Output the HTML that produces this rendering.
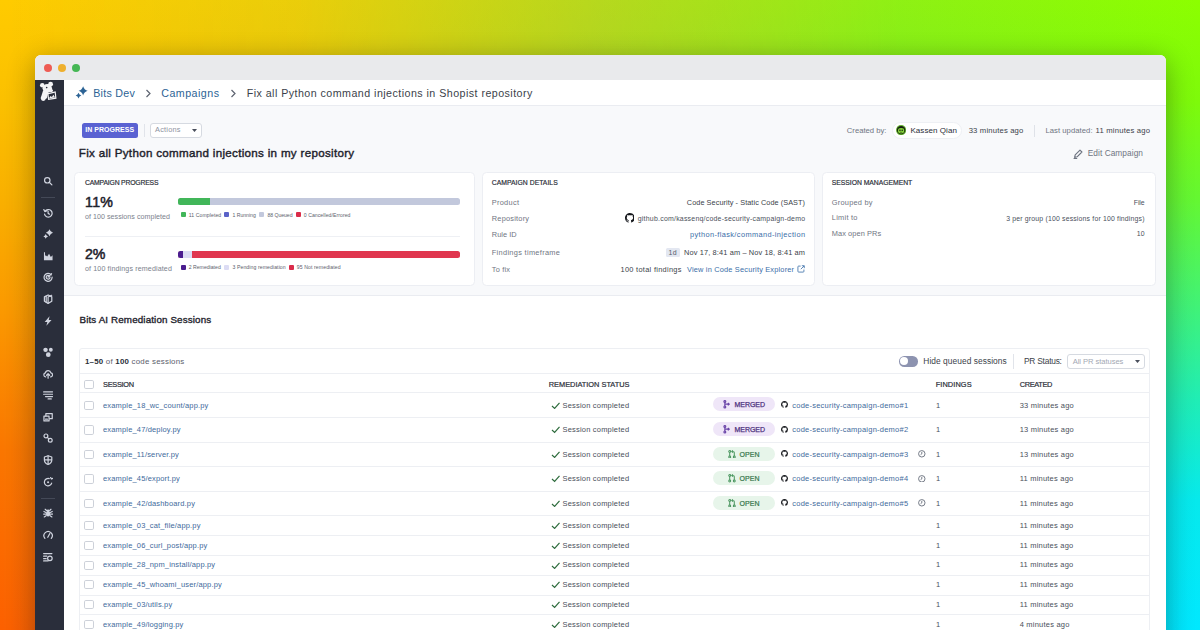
<!DOCTYPE html>
<html lang="en"><head><meta charset="utf-8"><title>Bits Dev – Campaigns</title>
<style>
html,body{margin:0;padding:0;}
body{width:1200px;height:630px;overflow:hidden;position:relative;font-family:'Liberation Sans', sans-serif;background:#8cff00;}
#bg1,#bg2,#bg3{position:absolute;left:0;top:0;width:1200px;height:630px;}
#bg1{background:linear-gradient(to bottom,#8cff00 0%,#7efa0a 15.9%,#64f732 31.7%,#40f278 48.9%,#20edb5 63.5%,#06e9ec 79.4%,#00e8ff 100%);}
#bg2{background:linear-gradient(to bottom,#ffcb00 0%,#fbc000 16%,#f9af00 32%,#fb9900 49%,#fa7600 71.4%,#fc6000 100%);
 -webkit-mask-image:linear-gradient(to right,rgba(0,0,0,1) 0%,rgba(0,0,0,.86) 25%,rgba(0,0,0,.42) 50%,rgba(0,0,0,.02) 75%,rgba(0,0,0,0) 100%);
 mask-image:linear-gradient(to right,rgba(0,0,0,1) 0%,rgba(0,0,0,.86) 25%,rgba(0,0,0,.42) 50%,rgba(0,0,0,.02) 75%,rgba(0,0,0,0) 100%);}
#bg3{background:linear-gradient(to right,rgba(148,120,200,0) 0%,rgba(148,120,200,.05) 25%,rgba(148,120,200,.15) 50%,rgba(148,120,200,.1) 75%,rgba(148,120,200,0) 100%);}
#win{position:absolute;left:35px;top:54.6px;width:1131px;height:640px;border-radius:6px 6px 0 0;overflow:hidden;background:#fff;}
#shadow{position:absolute;left:35px;top:54.6px;width:1131px;height:640px;border-radius:6px;box-shadow:0 6px 28px rgba(0,0,0,.33);}
#pg{position:absolute;left:-35px;top:-54.6px;width:1200px;height:630px;}
#pg div,#pg svg,#pg .t{position:absolute;box-sizing:border-box;}
.t{white-space:nowrap;}
</style></head><body>
<div id="bg1"></div><div id="bg2"></div><div id="bg3"></div>
<div id="shadow"></div>
<div id="win"><div id="pg">
<div style="left:35.00px;top:54.00px;width:1132.00px;height:26.20px;background:#e9eaec;"></div>
<div style="left:43.60px;top:63.60px;width:8.20px;height:8.20px;background:#ee5c54;border-radius:50%;"></div>
<div style="left:57.80px;top:63.60px;width:8.20px;height:8.20px;background:#eeb02e;border-radius:50%;"></div>
<div style="left:72.00px;top:63.60px;width:8.20px;height:8.20px;background:#45b755;border-radius:50%;"></div>
<div style="left:35.00px;top:80.20px;width:28.60px;height:560.00px;background:#2a2e3b;"></div>
<div style="left:63.60px;top:80.20px;width:1103.00px;height:26.00px;background:#fff;border-bottom:1px solid #eaecf1;"></div>
<div style="left:63.60px;top:106.20px;width:1103.00px;height:190.20px;background:#f8f9fb;border-bottom:1px solid #eaecf1;"></div>
<svg style="left:36.00px;top:78.00px;" width="26.00" height="26.00" viewBox="0 0 26 26"><g fill="#f4f4f6"><circle cx="6.300" cy="7.300" r="2.300"/><circle cx="14.600" cy="6.200" r="2.400"/><ellipse cx="11.300" cy="10.300" rx="4.700" ry="4.300"/><path d="M13.500 8.500l3.400 3.400c.5.900-.2 1.900-1.200 2l-4 .3z"/><path d="M7.200 12.300l5.300 1.700-1.700 6.300-4.200 2.200-1.900-2.600z"/><circle cx="7.300" cy="20.600" r="2.400"/><path d="M11.200 15.300l8.500-2.100.8 7.500-8.400 1.200z"/></g><path d="M12.500 16.300l6.200-1.500.5 4.900-6.100.9z" fill="#2a2e3b"/><path d="M12.900 20.300l1.700-2.200 1.300.9 1.500-2.300 1.700 2.800z" fill="#f4f4f6"/><circle cx="10.700" cy="9.600" r=".8" fill="#2a2e3b"/></svg>
<svg style="left:42.70px;top:176.30px;" width="10.20" height="10.20" viewBox="0 0 16 16"><circle cx="6.700" cy="6.700" r="4.300" fill="none" stroke="#cfd3de" stroke-width="1.9" stroke-linecap="round" stroke-linejoin="round" stroke-width="2.200"/><path d="M10.200 10.200L14 14" fill="none" stroke="#cfd3de" stroke-width="1.9" stroke-linecap="round" stroke-linejoin="round" stroke-width="2.400"/></svg>
<div style="left:41.00px;top:196.70px;width:14.00px;height:1.00px;background:#444957;"></div>
<svg style="left:42.70px;top:207.80px;" width="10.20" height="10.20" viewBox="0 0 16 16"><path d="M3.200 5.200A6 6 0 1 1 2.400 9.500" fill="none" stroke="#cfd3de" stroke-width="1.9" stroke-linecap="round" stroke-linejoin="round"/><path d="M1.300 2.500l1.700 3.100 3.200-1.300" fill="none" stroke="#cfd3de" stroke-width="1.9" stroke-linecap="round" stroke-linejoin="round"/><path d="M8 5v3.400l2.300 1.300" fill="none" stroke="#cfd3de" stroke-width="1.9" stroke-linecap="round" stroke-linejoin="round" stroke-width="1.600"/></svg>
<svg style="left:42.70px;top:229.40px;" width="10.20" height="10.20" viewBox="0 0 16 16"><path d="M10.20 0.20Q11.54 4.46 15.80 5.80Q11.54 7.14 10.20 11.40Q8.86 7.14 4.60 5.80Q8.86 4.46 10.20 0.20zM4.30 8.00Q5.19 10.81 8.00 11.70Q5.19 12.59 4.30 15.40Q3.41 12.59 0.60 11.70Q3.41 10.81 4.30 8.00z" fill="#cfd3de"/></svg>
<svg style="left:42.70px;top:251.20px;" width="10.20" height="10.20" viewBox="0 0 16 16"><path d="M1.500 2v12.500H15V6.500l-2.700 2.800-2.800-4.800-3 4.200L4.300 6.800 3.200 8V2z" fill="#cfd3de"/></svg>
<svg style="left:42.70px;top:272.10px;" width="10.20" height="10.20" viewBox="0 0 16 16"><path d="M13 4.500A6.300 6.300 0 1 0 14.300 8" fill="none" stroke="#cfd3de" stroke-width="1.9" stroke-linecap="round" stroke-linejoin="round" stroke-width="1.800"/><path d="M10.500 6.500A3 3 0 1 0 11 8" fill="none" stroke="#cfd3de" stroke-width="1.9" stroke-linecap="round" stroke-linejoin="round" stroke-width="1.600"/><path d="M8 8l5.500-5.500" fill="none" stroke="#cfd3de" stroke-width="1.9" stroke-linecap="round" stroke-linejoin="round" stroke-width="1.600"/></svg>
<svg style="left:42.70px;top:294.30px;" width="10.20" height="10.20" viewBox="0 0 16 16"><path d="M8 1.500l5.800 3v7L8 14.700 2.200 11.500v-7z" fill="none" stroke="#cfd3de" stroke-width="1.9" stroke-linecap="round" stroke-linejoin="round" stroke-width="1.700"/><path d="M5 3.200v9.500M8 4.800v9.700M8 4.800l5.600-2.800" fill="none" stroke="#cfd3de" stroke-width="1.9" stroke-linecap="round" stroke-linejoin="round" stroke-width="1.500"/></svg>
<svg style="left:42.70px;top:315.80px;" width="10.20" height="10.20" viewBox="0 0 16 16"><path d="M10.300 .5L2.600 9.300h4.200L5.300 15.500l8.100-9.200H9z" fill="#cfd3de"/></svg>
<svg style="left:42.70px;top:347.40px;" width="10.20" height="10.20" viewBox="0 0 16 16"><circle cx="4" cy="4.500" r="3.500" fill="#cfd3de"/><circle cx="12.300" cy="4.300" r="3" fill="#cfd3de"/><circle cx="8.300" cy="12" r="3.700" fill="#cfd3de"/></svg>
<svg style="left:42.70px;top:368.90px;" width="10.20" height="10.20" viewBox="0 0 16 16"><path d="M4.200 12.500a3.200 3.200 0 0 1-.4-6.300A4.400 4.400 0 0 1 12.400 6a3.300 3.300 0 0 1-.4 6.500" fill="none" stroke="#cfd3de" stroke-width="1.9" stroke-linecap="round" stroke-linejoin="round" stroke-width="1.700"/><path d="M8 14.500V7.500M5.600 9.800L8 7.300l2.400 2.500" fill="none" stroke="#cfd3de" stroke-width="1.9" stroke-linecap="round" stroke-linejoin="round" stroke-width="1.700"/></svg>
<svg style="left:42.70px;top:390.20px;" width="10.20" height="10.20" viewBox="0 0 16 16"><path d="M1 3h14M1 6.700h14M4 10.400h11M8 14h5" fill="none" stroke="#cfd3de" stroke-width="1.9" stroke-linecap="round" stroke-linejoin="round" stroke-width="2"/></svg>
<svg style="left:42.70px;top:411.90px;" width="10.20" height="10.20" viewBox="0 0 16 16"><path d="M4.500 6V2.500h10v8h-4" fill="none" stroke="#cfd3de" stroke-width="1.9" stroke-linecap="round" stroke-linejoin="round" stroke-width="1.700"/><rect x="1.500" y="6.500" width="8" height="7.500" fill="none" stroke="#cfd3de" stroke-width="1.9" stroke-linecap="round" stroke-linejoin="round" stroke-width="1.700"/><path d="M4 11.300h3" fill="none" stroke="#cfd3de" stroke-width="1.9" stroke-linecap="round" stroke-linejoin="round" stroke-width="1.400"/></svg>
<svg style="left:42.70px;top:433.40px;" width="10.20" height="10.20" viewBox="0 0 16 16"><circle cx="4.600" cy="4.600" r="3" fill="none" stroke="#cfd3de" stroke-width="1.9" stroke-linecap="round" stroke-linejoin="round" stroke-width="1.800"/><circle cx="11.400" cy="11.400" r="3" fill="none" stroke="#cfd3de" stroke-width="1.9" stroke-linecap="round" stroke-linejoin="round" stroke-width="1.800"/><path d="M6.800 6.800l2.400 2.400" fill="none" stroke="#cfd3de" stroke-width="1.9" stroke-linecap="round" stroke-linejoin="round" stroke-width="1.800"/></svg>
<svg style="left:42.70px;top:454.90px;" width="10.20" height="10.20" viewBox="0 0 16 16"><path d="M8 1.200l5.800 2v4.600c0 3.300-2.300 5.800-5.800 7-3.500-1.200-5.800-3.700-5.800-7V3.200z" fill="none" stroke="#cfd3de" stroke-width="1.9" stroke-linecap="round" stroke-linejoin="round" stroke-width="1.700"/><path d="M8 1.500v13M2.500 7.500h11" fill="none" stroke="#cfd3de" stroke-width="1.9" stroke-linecap="round" stroke-linejoin="round" stroke-width="1.300"/></svg>
<svg style="left:42.70px;top:476.90px;" width="10.20" height="10.20" viewBox="0 0 16 16"><path d="M13.600 9.500A5.800 5.800 0 1 1 9.800 2.600" fill="none" stroke="#cfd3de" stroke-width="1.9" stroke-linecap="round" stroke-linejoin="round" stroke-width="1.900"/><path d="M12 .8l1.200 2.400 2.300-1.200" fill="none" stroke="#cfd3de" stroke-width="1.9" stroke-linecap="round" stroke-linejoin="round" stroke-width="1.500"/><circle cx="8" cy="8.200" r="1.600" fill="#cfd3de"/></svg>
<div style="left:41.00px;top:497.50px;width:14.00px;height:1.00px;background:#444957;"></div>
<svg style="left:42.70px;top:508.40px;" width="10.20" height="10.20" viewBox="0 0 16 16"><ellipse cx="8" cy="9" rx="3.300" ry="4.300" fill="#cfd3de"/><path d="M5.500 4l-2-2M10.500 4l2-2M4.500 7L1.500 5.500M11.500 7l3-1.500M4.500 9.500h-3.500M11.500 9.500H15M4.800 12l-2.800 2M11.200 12l2.800 2" fill="none" stroke="#cfd3de" stroke-width="1.9" stroke-linecap="round" stroke-linejoin="round" stroke-width="1.400"/><circle cx="8" cy="4.500" r="2" fill="#cfd3de"/></svg>
<svg style="left:42.70px;top:529.90px;" width="10.20" height="10.20" viewBox="0 0 16 16"><path d="M3 13A6.500 6.500 0 1 1 13 13" fill="none" stroke="#cfd3de" stroke-width="1.9" stroke-linecap="round" stroke-linejoin="round" stroke-width="1.900"/><path d="M7.500 11.500l3.300-6" fill="none" stroke="#cfd3de" stroke-width="1.9" stroke-linecap="round" stroke-linejoin="round" stroke-width="2.100"/></svg>
<svg style="left:42.70px;top:551.90px;" width="10.20" height="10.20" viewBox="0 0 16 16"><path d="M1 2.500h13M1 6.500h5M1 10.500h4M1 14h7" fill="none" stroke="#cfd3de" stroke-width="1.9" stroke-linecap="round" stroke-linejoin="round" stroke-width="1.800"/><circle cx="10.800" cy="10" r="3.600" fill="none" stroke="#cfd3de" stroke-width="1.9" stroke-linecap="round" stroke-linejoin="round" stroke-width="1.700"/></svg>
<svg style="left:74.60px;top:86.00px;" width="13.00" height="13.40" viewBox="0 0 16 16.500"><path d="M10.00 0.40Q11.23 4.77 15.60 6.00Q11.23 7.23 10.00 11.60Q8.77 7.23 4.40 6.00Q8.77 4.77 10.00 0.40zM4.30 8.30Q5.07 11.03 7.80 11.80Q5.07 12.57 4.30 15.30Q3.53 12.57 0.80 11.80Q3.53 11.03 4.30 8.30z" fill="#2c6395"/></svg>
<span class="t" style="top:85.63px;font-size:10.7px;line-height:14.98px;color:#2c6395;letter-spacing:0.244px;left:93.25px;">Bits Dev</span>
<svg style="left:144.50px;top:88.70px;" width="6.00" height="9.00" viewBox="0 0 6 9"><path d="M1.500 1l3.500 3.500L1.500 8" fill="none" stroke="#5d6370" stroke-width="1.200"/></svg>
<span class="t" style="top:85.63px;font-size:10.7px;line-height:14.98px;color:#2c6395;letter-spacing:0.465px;left:161.25px;">Campaigns</span>
<svg style="left:230.20px;top:88.70px;" width="6.00" height="9.00" viewBox="0 0 6 9"><path d="M1.500 1l3.500 3.500L1.500 8" fill="none" stroke="#5d6370" stroke-width="1.200"/></svg>
<span class="t" style="top:85.63px;font-size:10.7px;line-height:14.98px;color:#3b3f4a;letter-spacing:0.450px;left:246.70px;">Fix all Python command injections in Shopist repository</span>
<div style="left:81.75px;top:123.00px;width:56.50px;height:14.50px;background:#5a62d2;border-radius:2.500px;"></div>
<span class="t" style="top:125.28px;font-size:7px;line-height:9.8px;color:#fff;font-weight:700;letter-spacing:0.034px;left:85.20px;">IN PROGRESS</span>
<div style="left:143.60px;top:124.00px;width:1.00px;height:12.50px;background:#e1e4ea;"></div>
<div style="left:149.50px;top:122.50px;width:52.25px;height:15.20px;background:#fff;border:1px solid #d6dae1;border-radius:3px;"></div>
<span class="t" style="top:124.99px;font-size:7.4px;line-height:10.36px;color:#8e939f;letter-spacing:0.214px;left:155.00px;">Actions</span>
<svg style="left:192.20px;top:129.00px;" width="5.00" height="3.40" viewBox="0 0 6 4"><path d="M0 0h6L3 3.600z" fill="#4a4f5c"/></svg>
<span class="t" style="top:145.26px;font-size:11.6px;line-height:16.24px;color:#1e222c;-webkit-text-stroke:0.41px #1e222c;letter-spacing:0.308px;left:78.75px;">Fix all Python command injections in my repository</span>
<span class="t" style="top:125.56px;font-size:7.7px;line-height:10.78px;color:#6f7582;letter-spacing:-0.005px;left:846.80px;">Created by:</span>
<div style="left:892.30px;top:121.70px;width:69.50px;height:17.20px;background:#fff;border:1px solid #eef0f4;border-radius:8.600px;"></div>
<svg style="left:895.50px;top:125.20px;" width="10.20" height="10.20" viewBox="0 0 10 10"><circle cx="5" cy="5" r="5" fill="#5fae2c"/><circle cx="5" cy="5" r="4.100" fill="#182012"/><ellipse cx="5" cy="5.700" rx="3.100" ry="2.700" fill="#86d83a"/><path d="M2.700 3.600L3.600 5M7.300 3.600L6.400 5" stroke="#86d83a" stroke-width="1"/><circle cx="3.900" cy="5.200" r=".75" fill="#182012"/><circle cx="6.100" cy="5.200" r=".75" fill="#182012"/><path d="M3.800 6.900q1.200.8 2.400 0" stroke="#182012" stroke-width=".5" fill="none"/></svg>
<span class="t" style="top:125.34px;font-size:8px;line-height:11.2px;color:#2a2e38;letter-spacing:0.072px;left:910.40px;">Kassen Qian</span>
<span class="t" style="top:125.56px;font-size:7.7px;line-height:10.78px;color:#3b3f4a;letter-spacing:0.159px;left:968.70px;">33 minutes ago</span>
<div style="left:1034.30px;top:125.00px;width:1.00px;height:12.00px;background:#dfe2e8;"></div>
<span class="t" style="top:125.56px;font-size:7.7px;line-height:10.78px;color:#6f7582;letter-spacing:0.047px;left:1045.40px;">Last updated:</span>
<span class="t" style="top:125.56px;font-size:7.7px;line-height:10.78px;color:#3b3f4a;letter-spacing:0.200px;left:1095.50px;">11 minutes ago</span>
<svg style="left:1073.20px;top:149.20px;" width="10.00" height="10.00" viewBox="0 0 10 10"><path d="M1.600 8.400l.6-2.500L7 1.100l1.900 1.900L4.100 7.800z" fill="none" stroke="#6f7582" stroke-width="1.150" stroke-linejoin="round"/><path d="M.6 9.500h3.600" stroke="#6f7582" stroke-width="1"/></svg>
<span class="t" style="top:147.92px;font-size:8.3px;line-height:11.62px;color:#6f7582;letter-spacing:0.068px;left:1087.70px;">Edit Campaign</span>
<div style="left:73.90px;top:172.00px;width:401.60px;height:113.50px;background:#fff;border:1px solid #eceef3;border-radius:4.500px;"></div>
<div style="left:481.75px;top:172.00px;width:333.25px;height:113.50px;background:#fff;border:1px solid #eceef3;border-radius:4.500px;"></div>
<div style="left:821.75px;top:172.00px;width:333.80px;height:113.50px;background:#fff;border:1px solid #eceef3;border-radius:4.500px;"></div>
<span class="t" style="top:177.63px;font-size:6.8px;line-height:9.52px;color:#2a2e38;-webkit-text-stroke:0.18px #2a2e38;letter-spacing:-0.172px;left:85.00px;">CAMPAIGN PROGRESS</span>
<span class="t" style="top:177.63px;font-size:6.8px;line-height:9.52px;color:#2a2e38;-webkit-text-stroke:0.18px #2a2e38;letter-spacing:0.033px;left:491.75px;">CAMPAIGN DETAILS</span>
<span class="t" style="top:177.63px;font-size:6.8px;line-height:9.52px;color:#2a2e38;-webkit-text-stroke:0.18px #2a2e38;letter-spacing:-0.018px;left:831.75px;">SESSION MANAGEMENT</span>
<span class="t" style="top:192.92px;font-size:14.2px;line-height:19.88px;color:#1e222c;-webkit-text-stroke:0.50px #1e222c;letter-spacing:0.302px;left:85.00px;">11%</span>
<span class="t" style="top:213.21px;font-size:7.1px;line-height:9.94px;color:#7b818d;letter-spacing:0.040px;left:85.00px;">of 100 sessions completed</span>
<div style="left:178.00px;top:198.25px;width:282.00px;height:6.90px;background:#c2c8dc;border-radius:2.500px;"></div>
<div style="left:178.00px;top:198.25px;width:31.50px;height:6.90px;background:#41b659;border-radius:2.500px 0 0 2.500px;"></div>
<div style="left:180.75px;top:212.40px;width:5.00px;height:5.00px;background:#41b659;border-radius:1px;"></div>
<span class="t" style="top:211.66px;font-size:5.15px;line-height:7.21px;color:#5b606c;letter-spacing:0.073px;left:188.75px;">11 Completed</span>
<div style="left:224.25px;top:212.40px;width:5.00px;height:5.00px;background:#5a62c8;border-radius:1px;"></div>
<span class="t" style="top:211.66px;font-size:5.15px;line-height:7.21px;color:#5b606c;letter-spacing:-0.021px;left:232.50px;">1 Running</span>
<div style="left:259.25px;top:212.40px;width:5.00px;height:5.00px;background:#c2c8dc;border-radius:1px;"></div>
<span class="t" style="top:211.66px;font-size:5.15px;line-height:7.21px;color:#5b606c;letter-spacing:-0.050px;left:267.50px;">88 Queued</span>
<div style="left:296.00px;top:212.40px;width:5.00px;height:5.00px;background:#da2c4a;border-radius:1px;"></div>
<span class="t" style="top:211.66px;font-size:5.15px;line-height:7.21px;color:#5b606c;letter-spacing:0.054px;left:303.75px;">0 Cancelled/Errored</span>
<div style="left:85.00px;top:236.00px;width:375.00px;height:1.00px;background:#eef0f4;"></div>
<span class="t" style="top:245.02px;font-size:14.2px;line-height:19.88px;color:#1e222c;-webkit-text-stroke:0.50px #1e222c;letter-spacing:-0.258px;left:85.00px;">2%</span>
<span class="t" style="top:265.21px;font-size:7.1px;line-height:9.94px;color:#7b818d;letter-spacing:0.130px;left:85.00px;">of 100 findings remediated</span>
<div style="left:178.00px;top:250.75px;width:282.00px;height:6.90px;background:#e0364f;border-radius:2.500px;"></div>
<div style="left:178.00px;top:250.75px;width:14.00px;height:6.90px;background:#dcdcf4;border-radius:2.500px 0 0 2.500px;"></div>
<div style="left:178.00px;top:250.75px;width:5.20px;height:6.90px;background:#4b1d8f;border-radius:2.500px 0 0 2.500px;"></div>
<div style="left:180.75px;top:264.70px;width:5.00px;height:5.00px;background:#4b1d8f;border-radius:1px;"></div>
<span class="t" style="top:263.96px;font-size:5.15px;line-height:7.21px;color:#5b606c;letter-spacing:-0.001px;left:188.75px;">2 Remediated</span>
<div style="left:224.25px;top:264.70px;width:5.00px;height:5.00px;background:#dcdcf4;border-radius:1px;"></div>
<span class="t" style="top:263.96px;font-size:5.15px;line-height:7.21px;color:#5b606c;letter-spacing:0.086px;left:232.50px;">3 Pending remediation</span>
<div style="left:288.75px;top:264.70px;width:5.00px;height:5.00px;background:#da2c4a;border-radius:1px;"></div>
<span class="t" style="top:263.96px;font-size:5.15px;line-height:7.21px;color:#5b606c;letter-spacing:0.100px;left:296.75px;">95 Not remediated</span>
<span class="t" style="top:197.89px;font-size:7.4px;line-height:10.36px;color:#6f7582;letter-spacing:0.288px;left:491.75px;">Product</span>
<span class="t" style="top:213.64px;font-size:7.4px;line-height:10.36px;color:#6f7582;letter-spacing:0.217px;left:491.75px;">Repository</span>
<span class="t" style="top:230.19px;font-size:7.4px;line-height:10.36px;color:#6f7582;letter-spacing:0.049px;left:491.75px;">Rule ID</span>
<span class="t" style="top:247.79px;font-size:7.4px;line-height:10.36px;color:#6f7582;letter-spacing:0.314px;left:491.75px;">Findings timeframe</span>
<span class="t" style="top:264.64px;font-size:7.4px;line-height:10.36px;color:#6f7582;letter-spacing:0.208px;left:491.75px;">To fix</span>
<span class="t" style="top:197.96px;font-size:7.3px;line-height:10.22px;color:#3b3f4a;letter-spacing:0.067px;right:394.93px;">Code Security - Static Code (SAST)</span>
<svg style="left:624.50px;top:213.40px;" width="9.80" height="9.80" viewBox="0 0 16 16"><path fill="#16181d" d="M8 0C3.580 0 0 3.580 0 8c0 3.540 2.290 6.530 5.470 7.590.4.070.55-.17.55-.38 0-.19-.01-.82-.01-1.490-2.010.37-2.530-.49-2.690-.94-.09-.23-.48-.94-.82-1.130-.28-.15-.68-.52-.01-.53.630-.01 1.080.58 1.230.82.720 1.210 1.870.87 2.330.66.070-.52.280-.87.510-1.070-1.780-.2-3.640-.89-3.640-3.950 0-.87.310-1.590.82-2.150-.08-.2-.36-1.020.08-2.120 0 0 .67-.21 2.200.82.640-.18 1.320-.27 2-.27s1.360.09 2 .27c1.530-1.040 2.200-.82 2.200-.82.440 1.100.16 1.920.08 2.120.51.560.82 1.270.82 2.150 0 3.070-1.870 3.750-3.650 3.950.29.250.54.730.54 1.480 0 1.070-.01 1.930-.01 2.200 0 .21.150.46.550.38A8.010 8.010 0 0 0 16 8c0-4.420-3.580-8-8-8z"/></svg>
<span class="t" style="top:213.97px;font-size:6.95px;line-height:9.73px;color:#4a4f5b;letter-spacing:0.229px;right:394.77px;">github.com/kassenq/code-security-campaign-demo</span>
<span class="t" style="top:229.89px;font-size:7.4px;line-height:10.36px;color:#3a6ea8;letter-spacing:0.385px;right:394.61px;">python-flask/command-injection</span>
<div style="left:665.75px;top:247.80px;width:13.75px;height:9.40px;background:#e3e7f1;border-radius:1.500px;"></div>
<span class="t" style="top:247.99px;font-size:7px;line-height:9.8px;color:#555b69;letter-spacing:0.352px;left:668.50px;">1d</span>
<span class="t" style="top:247.99px;font-size:7.4px;line-height:10.36px;color:#3b3f4a;letter-spacing:0.138px;right:394.86px;">Nov 17, 8:41 am &ndash; Nov 18, 8:41 am</span>
<span class="t" style="top:264.64px;font-size:7.4px;line-height:10.36px;color:#3b3f4a;letter-spacing:0.298px;left:620.50px;">100 total findings</span>
<span class="t" style="top:264.64px;font-size:7.4px;line-height:10.36px;color:#3a6ea8;letter-spacing:0.183px;left:687.00px;">View in Code Security Explorer</span>
<svg style="left:796.80px;top:264.80px;" width="8.00" height="8.00" viewBox="0 0 8.800 8.800"><path d="M4 1.200H1.800a.8.800 0 0 0-.8.800V7a.8.800 0 0 0 .8.800H6.800a.8.800 0 0 0 .8-.8V5M5.300.8H8v2.700M7.800 1L4.200 4.600" fill="none" stroke="#3a6ea8" stroke-width=".9"/></svg>
<span class="t" style="top:197.89px;font-size:7.4px;line-height:10.36px;color:#6f7582;letter-spacing:0.237px;left:831.75px;">Grouped by</span>
<span class="t" style="top:213.39px;font-size:7.4px;line-height:10.36px;color:#6f7582;letter-spacing:0.271px;left:831.75px;">Limit to</span>
<span class="t" style="top:228.64px;font-size:7.4px;line-height:10.36px;color:#6f7582;letter-spacing:0.085px;left:831.75px;">Max open PRs</span>
<span class="t" style="top:198.26px;font-size:6.9px;line-height:9.66px;color:#4a4f5b;letter-spacing:-0.152px;right:55.65px;">File</span>
<span class="t" style="top:213.76px;font-size:6.9px;line-height:9.66px;color:#4a4f5b;letter-spacing:0.174px;right:55.33px;">3 per group (100 sessions for 100 findings)</span>
<span class="t" style="top:229.01px;font-size:6.9px;line-height:9.66px;color:#4a4f5b;letter-spacing:0.164px;right:55.34px;">10</span>
<span class="t" style="top:313.20px;font-size:9.8px;line-height:13.72px;color:#1e222c;-webkit-text-stroke:0.34px #1e222c;letter-spacing:0.135px;left:79.50px;">Bits AI Remediation Sessions</span>
<div style="left:79.10px;top:347.50px;width:1071.10px;height:300.00px;border:1px solid #edeff3;border-radius:3px;"></div>
<div style="left:79.10px;top:373.40px;width:1071.10px;height:1.00px;background:#edeff3;"></div>
<div style="left:79.10px;top:392.20px;width:1071.10px;height:1.00px;background:#edeff3;"></div>
<span class="t" style="top:355.71px;font-size:7.9px;line-height:11.06px;color:#5b606c;letter-spacing:0.224px;left:85.00px;"><b style="color:#2a2e38">1&ndash;50</b> of <b style="color:#2a2e38">100</b> code sessions</span>
<div style="left:899.00px;top:356.00px;width:19.30px;height:10.60px;background:#8d93b0;border-radius:5.300px;"></div>
<div style="left:900.30px;top:357.30px;width:8.00px;height:8.00px;background:#fff;border-radius:50%;"></div>
<span class="t" style="top:355.54px;font-size:8.4px;line-height:11.76px;color:#3b3f4a;letter-spacing:0.049px;left:923.30px;">Hide queued sessions</span>
<div style="left:1012.50px;top:354.00px;width:1.00px;height:14.50px;background:#e1e4ea;"></div>
<span class="t" style="top:355.54px;font-size:8.4px;line-height:11.76px;color:#3b3f4a;letter-spacing:-0.233px;left:1024.00px;">PR Status:</span>
<div style="left:1067.30px;top:353.60px;width:77.60px;height:15.00px;background:#fff;border:1px solid #d6dae1;border-radius:3px;"></div>
<span class="t" style="top:356.74px;font-size:7.6px;line-height:10.64px;color:#a3a8b3;letter-spacing:-0.060px;left:1072.70px;">All PR statuses</span>
<svg style="left:1135.00px;top:359.90px;" width="5.00" height="3.40" viewBox="0 0 6 4"><path d="M0 0h6L3 3.600z" fill="#4a4f5c"/></svg>
<div style="left:84.40px;top:379.60px;width:9.20px;height:9.20px;background:#fff;border:1px solid #cdd1d9;border-radius:1.800px;"></div>
<span class="t" style="top:379.69px;font-size:7.4px;line-height:10.36px;color:#2a2e38;-webkit-text-stroke:0.20px #2a2e38;letter-spacing:-0.301px;left:103.00px;">SESSION</span>
<span class="t" style="top:379.69px;font-size:7.4px;line-height:10.36px;color:#2a2e38;-webkit-text-stroke:0.20px #2a2e38;letter-spacing:-0.008px;left:548.75px;">REMEDIATION STATUS</span>
<span class="t" style="top:379.69px;font-size:7.4px;line-height:10.36px;color:#2a2e38;-webkit-text-stroke:0.20px #2a2e38;letter-spacing:0.086px;left:935.70px;">FINDINGS</span>
<span class="t" style="top:379.69px;font-size:7.4px;line-height:10.36px;color:#2a2e38;-webkit-text-stroke:0.20px #2a2e38;letter-spacing:-0.352px;left:1019.70px;">CREATED</span>
<div style="left:80.10px;top:417.00px;width:1069.10px;height:1.00px;background:#edeff3;"></div>
<div style="left:84.40px;top:400.90px;width:9.20px;height:9.20px;background:#fff;border:1px solid #cdd1d9;border-radius:1.800px;"></div>
<span class="t" style="top:400.81px;font-size:7.5px;line-height:10.5px;color:#426a9c;letter-spacing:0.160px;left:103.00px;">example_18_wc_count/app.py</span>
<svg style="left:551.00px;top:401.90px;" width="9.50" height="7.50" viewBox="0 0 10 8"><path d="M1 4.200l2.800 2.600L9 1" fill="none" stroke="#2d6b3c" stroke-width="1.300"/></svg>
<span class="t" style="top:400.81px;font-size:7.5px;line-height:10.5px;color:#4a4f5b;letter-spacing:0.199px;left:562.50px;">Session completed</span>
<div style="left:713.00px;top:397.30px;width:61.50px;height:14.00px;background:#efe6f8;border-radius:7px;"></div>
<svg style="left:722.60px;top:400.20px;" width="7.80" height="8.40" viewBox="0 0 8 9"><g fill="none" stroke="#6a45a8" stroke-width="1.250"><circle cx="1.800" cy="1.600" r="1"/><circle cx="1.800" cy="7.400" r="1"/><path d="M1.800 2.600v3.800M1.800 4.500h4.600M5 3.200l1.500 1.300L5 5.800"/></g></svg>
<span class="t" style="top:400.09px;font-size:7px;line-height:9.8px;color:#4f3480;letter-spacing:-0.039px;left:734.50px;-webkit-text-stroke:.25px #4f3480;">MERGED</span>
<svg style="left:780.70px;top:401.40px;" width="7.00" height="7.00" viewBox="0 0 16 16"><path fill="#16181d" d="M8 0C3.580 0 0 3.580 0 8c0 3.540 2.290 6.530 5.470 7.590.4.070.55-.17.55-.38 0-.19-.01-.82-.01-1.490-2.010.37-2.530-.49-2.690-.94-.09-.23-.48-.94-.82-1.130-.28-.15-.68-.52-.01-.53.630-.01 1.080.58 1.230.82.720 1.210 1.870.87 2.330.66.070-.52.280-.87.510-1.070-1.780-.2-3.640-.89-3.640-3.950 0-.87.310-1.590.82-2.150-.08-.2-.36-1.020.08-2.120 0 0 .67-.21 2.200.82.640-.18 1.320-.27 2-.27s1.360.09 2 .27c1.530-1.040 2.200-.82 2.200-.82.440 1.100.16 1.920.08 2.120.51.560.82 1.270.82 2.150 0 3.070-1.870 3.750-3.650 3.950.29.250.54.730.54 1.480 0 1.070-.01 1.930-.01 2.200 0 .21.150.46.550.38A8.010 8.010 0 0 0 16 8c0-4.420-3.580-8-8-8z"/></svg>
<span class="t" style="top:400.81px;font-size:7.5px;line-height:10.5px;color:#426a9c;letter-spacing:0.234px;left:792.30px;">code-security-campaign-demo#1</span>
<span class="t" style="top:400.81px;font-size:7.5px;line-height:10.5px;color:#4a4f5b;left:935.90px;">1</span>
<span class="t" style="top:400.81px;font-size:7.5px;line-height:10.5px;color:#4a4f5b;letter-spacing:0.215px;left:1019.70px;">33 minutes ago</span>
<div style="left:80.10px;top:441.50px;width:1069.10px;height:1.00px;background:#edeff3;"></div>
<div style="left:84.40px;top:425.40px;width:9.20px;height:9.20px;background:#fff;border:1px solid #cdd1d9;border-radius:1.800px;"></div>
<span class="t" style="top:425.31px;font-size:7.5px;line-height:10.5px;color:#426a9c;letter-spacing:0.160px;left:103.00px;">example_47/deploy.py</span>
<svg style="left:551.00px;top:426.40px;" width="9.50" height="7.50" viewBox="0 0 10 8"><path d="M1 4.200l2.800 2.600L9 1" fill="none" stroke="#2d6b3c" stroke-width="1.300"/></svg>
<span class="t" style="top:425.31px;font-size:7.5px;line-height:10.5px;color:#4a4f5b;letter-spacing:0.199px;left:562.50px;">Session completed</span>
<div style="left:713.00px;top:422.40px;width:61.50px;height:14.00px;background:#efe6f8;border-radius:7px;"></div>
<svg style="left:722.60px;top:425.30px;" width="7.80" height="8.40" viewBox="0 0 8 9"><g fill="none" stroke="#6a45a8" stroke-width="1.250"><circle cx="1.800" cy="1.600" r="1"/><circle cx="1.800" cy="7.400" r="1"/><path d="M1.800 2.600v3.800M1.800 4.500h4.600M5 3.200l1.500 1.300L5 5.800"/></g></svg>
<span class="t" style="top:425.19px;font-size:7px;line-height:9.8px;color:#4f3480;letter-spacing:-0.039px;left:734.50px;-webkit-text-stroke:.25px #4f3480;">MERGED</span>
<svg style="left:780.70px;top:425.90px;" width="7.00" height="7.00" viewBox="0 0 16 16"><path fill="#16181d" d="M8 0C3.580 0 0 3.580 0 8c0 3.540 2.290 6.530 5.470 7.590.4.070.55-.17.55-.38 0-.19-.01-.82-.01-1.490-2.010.37-2.530-.49-2.690-.94-.09-.23-.48-.94-.82-1.130-.28-.15-.68-.52-.01-.53.630-.01 1.080.58 1.230.82.720 1.210 1.870.87 2.330.66.070-.52.280-.87.510-1.070-1.780-.2-3.640-.89-3.640-3.950 0-.87.310-1.590.82-2.150-.08-.2-.36-1.020.08-2.120 0 0 .67-.21 2.200.82.640-.18 1.320-.27 2-.27s1.360.09 2 .27c1.530-1.040 2.200-.82 2.200-.82.440 1.100.16 1.920.08 2.120.51.560.82 1.270.82 2.150 0 3.070-1.870 3.750-3.650 3.950.29.250.54.730.54 1.480 0 1.070-.01 1.930-.01 2.200 0 .21.150.46.550.38A8.010 8.010 0 0 0 16 8c0-4.420-3.580-8-8-8z"/></svg>
<span class="t" style="top:425.31px;font-size:7.5px;line-height:10.5px;color:#426a9c;letter-spacing:0.234px;left:792.30px;">code-security-campaign-demo#2</span>
<span class="t" style="top:425.31px;font-size:7.5px;line-height:10.5px;color:#4a4f5b;left:935.90px;">1</span>
<span class="t" style="top:425.31px;font-size:7.5px;line-height:10.5px;color:#4a4f5b;letter-spacing:0.215px;left:1019.70px;">13 minutes ago</span>
<div style="left:80.10px;top:466.00px;width:1069.10px;height:1.00px;background:#edeff3;"></div>
<div style="left:84.40px;top:449.90px;width:9.20px;height:9.20px;background:#fff;border:1px solid #cdd1d9;border-radius:1.800px;"></div>
<span class="t" style="top:449.81px;font-size:7.5px;line-height:10.5px;color:#426a9c;letter-spacing:0.160px;left:103.00px;">example_11/server.py</span>
<svg style="left:551.00px;top:450.90px;" width="9.50" height="7.50" viewBox="0 0 10 8"><path d="M1 4.200l2.800 2.600L9 1" fill="none" stroke="#2d6b3c" stroke-width="1.300"/></svg>
<span class="t" style="top:449.81px;font-size:7.5px;line-height:10.5px;color:#4a4f5b;letter-spacing:0.199px;left:562.50px;">Session completed</span>
<div style="left:713.00px;top:446.90px;width:61.50px;height:14.00px;background:#e7f5ea;border-radius:7px;"></div>
<svg style="left:727.90px;top:449.60px;" width="8.00" height="8.60" viewBox="0 0 8.200 9"><g fill="none" stroke="#4a965f" stroke-width="1.050"><circle cx="1.700" cy="1.600" r="1"/><circle cx="1.700" cy="7.400" r="1"/><circle cx="6.500" cy="7.400" r="1"/><path d="M1.700 2.600v3.800M6.500 6.400V3.200c0-1-.6-1.500-1.500-1.500H4M5 .5L3.800 1.700 5 2.900"/></g></svg>
<span class="t" style="top:449.69px;font-size:7px;line-height:9.8px;color:#35754a;letter-spacing:0.039px;left:739.50px;-webkit-text-stroke:.2px #35754a;">OPEN</span>
<svg style="left:780.70px;top:450.40px;" width="7.00" height="7.00" viewBox="0 0 16 16"><path fill="#16181d" d="M8 0C3.580 0 0 3.580 0 8c0 3.540 2.290 6.530 5.470 7.590.4.070.55-.17.55-.38 0-.19-.01-.82-.01-1.490-2.010.37-2.530-.49-2.690-.94-.09-.23-.48-.94-.82-1.130-.28-.15-.68-.52-.01-.53.630-.01 1.080.58 1.230.82.720 1.210 1.870.87 2.330.66.070-.52.280-.87.510-1.070-1.780-.2-3.640-.89-3.640-3.950 0-.87.310-1.590.82-2.150-.08-.2-.36-1.020.08-2.120 0 0 .67-.21 2.200.82.640-.18 1.320-.27 2-.27s1.360.09 2 .27c1.530-1.040 2.200-.82 2.200-.82.440 1.100.16 1.920.08 2.120.51.560.82 1.270.82 2.150 0 3.070-1.870 3.750-3.650 3.950.29.250.54.730.54 1.480 0 1.070-.01 1.930-.01 2.200 0 .21.150.46.550.38A8.010 8.010 0 0 0 16 8c0-4.420-3.580-8-8-8z"/></svg>
<span class="t" style="top:449.81px;font-size:7.5px;line-height:10.5px;color:#426a9c;letter-spacing:0.234px;left:792.30px;">code-security-campaign-demo#3</span>
<svg style="left:918.20px;top:450.10px;" width="7.60" height="7.60" viewBox="0 0 8 8"><circle cx="4" cy="4" r="3.400" fill="none" stroke="#6f7582" stroke-width="1"/><path d="M4 2v2.100L2.700 5" fill="none" stroke="#6f7582" stroke-width="1"/></svg>
<span class="t" style="top:449.81px;font-size:7.5px;line-height:10.5px;color:#4a4f5b;left:935.90px;">1</span>
<span class="t" style="top:449.81px;font-size:7.5px;line-height:10.5px;color:#4a4f5b;letter-spacing:0.215px;left:1019.70px;">13 minutes ago</span>
<div style="left:80.10px;top:490.60px;width:1069.10px;height:1.00px;background:#edeff3;"></div>
<div style="left:84.40px;top:474.40px;width:9.20px;height:9.20px;background:#fff;border:1px solid #cdd1d9;border-radius:1.800px;"></div>
<span class="t" style="top:474.31px;font-size:7.5px;line-height:10.5px;color:#426a9c;letter-spacing:0.160px;left:103.00px;">example_45/export.py</span>
<svg style="left:551.00px;top:475.40px;" width="9.50" height="7.50" viewBox="0 0 10 8"><path d="M1 4.200l2.800 2.600L9 1" fill="none" stroke="#2d6b3c" stroke-width="1.300"/></svg>
<span class="t" style="top:474.31px;font-size:7.5px;line-height:10.5px;color:#4a4f5b;letter-spacing:0.199px;left:562.50px;">Session completed</span>
<div style="left:713.00px;top:471.40px;width:61.50px;height:14.00px;background:#e7f5ea;border-radius:7px;"></div>
<svg style="left:727.90px;top:474.10px;" width="8.00" height="8.60" viewBox="0 0 8.200 9"><g fill="none" stroke="#4a965f" stroke-width="1.050"><circle cx="1.700" cy="1.600" r="1"/><circle cx="1.700" cy="7.400" r="1"/><circle cx="6.500" cy="7.400" r="1"/><path d="M1.700 2.600v3.800M6.500 6.400V3.200c0-1-.6-1.500-1.500-1.500H4M5 .5L3.800 1.700 5 2.900"/></g></svg>
<span class="t" style="top:474.19px;font-size:7px;line-height:9.8px;color:#35754a;letter-spacing:0.039px;left:739.50px;-webkit-text-stroke:.2px #35754a;">OPEN</span>
<svg style="left:780.70px;top:474.90px;" width="7.00" height="7.00" viewBox="0 0 16 16"><path fill="#16181d" d="M8 0C3.580 0 0 3.580 0 8c0 3.540 2.290 6.530 5.470 7.590.4.070.55-.17.55-.38 0-.19-.01-.82-.01-1.490-2.010.37-2.530-.49-2.690-.94-.09-.23-.48-.94-.82-1.130-.28-.15-.68-.52-.01-.53.630-.01 1.080.58 1.230.82.720 1.210 1.870.87 2.330.66.070-.52.280-.87.510-1.070-1.780-.2-3.640-.89-3.640-3.950 0-.87.310-1.590.82-2.150-.08-.2-.36-1.020.08-2.120 0 0 .67-.21 2.200.82.640-.18 1.320-.27 2-.27s1.360.09 2 .27c1.530-1.040 2.200-.82 2.200-.82.440 1.100.16 1.920.08 2.120.51.560.82 1.270.82 2.150 0 3.070-1.870 3.750-3.650 3.950.29.250.54.730.54 1.480 0 1.070-.01 1.930-.01 2.200 0 .21.150.46.550.38A8.010 8.010 0 0 0 16 8c0-4.420-3.580-8-8-8z"/></svg>
<span class="t" style="top:474.31px;font-size:7.5px;line-height:10.5px;color:#426a9c;letter-spacing:0.234px;left:792.30px;">code-security-campaign-demo#4</span>
<svg style="left:918.20px;top:474.60px;" width="7.60" height="7.60" viewBox="0 0 8 8"><circle cx="4" cy="4" r="3.400" fill="none" stroke="#6f7582" stroke-width="1"/><path d="M4 2v2.100L2.700 5" fill="none" stroke="#6f7582" stroke-width="1"/></svg>
<span class="t" style="top:474.31px;font-size:7.5px;line-height:10.5px;color:#4a4f5b;left:935.90px;">1</span>
<span class="t" style="top:474.31px;font-size:7.5px;line-height:10.5px;color:#4a4f5b;letter-spacing:0.215px;left:1019.70px;">11 minutes ago</span>
<div style="left:80.10px;top:515.00px;width:1069.10px;height:1.00px;background:#edeff3;"></div>
<div style="left:84.40px;top:498.90px;width:9.20px;height:9.20px;background:#fff;border:1px solid #cdd1d9;border-radius:1.800px;"></div>
<span class="t" style="top:498.81px;font-size:7.5px;line-height:10.5px;color:#426a9c;letter-spacing:0.160px;left:103.00px;">example_42/dashboard.py</span>
<svg style="left:551.00px;top:499.90px;" width="9.50" height="7.50" viewBox="0 0 10 8"><path d="M1 4.200l2.800 2.600L9 1" fill="none" stroke="#2d6b3c" stroke-width="1.300"/></svg>
<span class="t" style="top:498.81px;font-size:7.5px;line-height:10.5px;color:#4a4f5b;letter-spacing:0.199px;left:562.50px;">Session completed</span>
<div style="left:713.00px;top:495.90px;width:61.50px;height:14.00px;background:#e7f5ea;border-radius:7px;"></div>
<svg style="left:727.90px;top:498.60px;" width="8.00" height="8.60" viewBox="0 0 8.200 9"><g fill="none" stroke="#4a965f" stroke-width="1.050"><circle cx="1.700" cy="1.600" r="1"/><circle cx="1.700" cy="7.400" r="1"/><circle cx="6.500" cy="7.400" r="1"/><path d="M1.700 2.600v3.800M6.500 6.400V3.200c0-1-.6-1.500-1.500-1.500H4M5 .5L3.800 1.700 5 2.900"/></g></svg>
<span class="t" style="top:498.69px;font-size:7px;line-height:9.8px;color:#35754a;letter-spacing:0.039px;left:739.50px;-webkit-text-stroke:.2px #35754a;">OPEN</span>
<svg style="left:780.70px;top:499.40px;" width="7.00" height="7.00" viewBox="0 0 16 16"><path fill="#16181d" d="M8 0C3.580 0 0 3.580 0 8c0 3.540 2.290 6.530 5.470 7.590.4.070.55-.17.55-.38 0-.19-.01-.82-.01-1.490-2.010.37-2.530-.49-2.690-.94-.09-.23-.48-.94-.82-1.130-.28-.15-.68-.52-.01-.53.630-.01 1.080.58 1.230.82.720 1.210 1.870.87 2.330.66.070-.52.280-.87.510-1.070-1.780-.2-3.640-.89-3.640-3.950 0-.87.310-1.590.82-2.150-.08-.2-.36-1.020.08-2.120 0 0 .67-.21 2.200.82.640-.18 1.320-.27 2-.27s1.360.09 2 .27c1.530-1.040 2.200-.82 2.200-.82.440 1.100.16 1.920.08 2.120.51.560.82 1.270.82 2.150 0 3.070-1.870 3.750-3.650 3.950.29.250.54.730.54 1.480 0 1.070-.01 1.930-.01 2.200 0 .21.150.46.550.38A8.010 8.010 0 0 0 16 8c0-4.420-3.580-8-8-8z"/></svg>
<span class="t" style="top:498.81px;font-size:7.5px;line-height:10.5px;color:#426a9c;letter-spacing:0.234px;left:792.30px;">code-security-campaign-demo#5</span>
<svg style="left:918.20px;top:499.10px;" width="7.60" height="7.60" viewBox="0 0 8 8"><circle cx="4" cy="4" r="3.400" fill="none" stroke="#6f7582" stroke-width="1"/><path d="M4 2v2.100L2.700 5" fill="none" stroke="#6f7582" stroke-width="1"/></svg>
<span class="t" style="top:498.81px;font-size:7.5px;line-height:10.5px;color:#4a4f5b;left:935.90px;">1</span>
<span class="t" style="top:498.81px;font-size:7.5px;line-height:10.5px;color:#4a4f5b;letter-spacing:0.215px;left:1019.70px;">11 minutes ago</span>
<div style="left:80.10px;top:535.30px;width:1069.10px;height:1.00px;background:#edeff3;"></div>
<div style="left:84.40px;top:520.80px;width:9.20px;height:9.20px;background:#fff;border:1px solid #cdd1d9;border-radius:1.800px;"></div>
<span class="t" style="top:520.71px;font-size:7.5px;line-height:10.5px;color:#426a9c;letter-spacing:0.160px;left:103.00px;">example_03_cat_file/app.py</span>
<svg style="left:551.00px;top:521.80px;" width="9.50" height="7.50" viewBox="0 0 10 8"><path d="M1 4.200l2.800 2.600L9 1" fill="none" stroke="#2d6b3c" stroke-width="1.300"/></svg>
<span class="t" style="top:520.71px;font-size:7.5px;line-height:10.5px;color:#4a4f5b;letter-spacing:0.199px;left:562.50px;">Session completed</span>
<span class="t" style="top:520.71px;font-size:7.5px;line-height:10.5px;color:#4a4f5b;left:935.90px;">1</span>
<span class="t" style="top:520.71px;font-size:7.5px;line-height:10.5px;color:#4a4f5b;letter-spacing:0.215px;left:1019.70px;">11 minutes ago</span>
<div style="left:80.10px;top:555.10px;width:1069.10px;height:1.00px;background:#edeff3;"></div>
<div style="left:84.40px;top:540.70px;width:9.20px;height:9.20px;background:#fff;border:1px solid #cdd1d9;border-radius:1.800px;"></div>
<span class="t" style="top:540.61px;font-size:7.5px;line-height:10.5px;color:#426a9c;letter-spacing:0.160px;left:103.00px;">example_06_curl_post/app.py</span>
<svg style="left:551.00px;top:541.70px;" width="9.50" height="7.50" viewBox="0 0 10 8"><path d="M1 4.200l2.800 2.600L9 1" fill="none" stroke="#2d6b3c" stroke-width="1.300"/></svg>
<span class="t" style="top:540.61px;font-size:7.5px;line-height:10.5px;color:#4a4f5b;letter-spacing:0.199px;left:562.50px;">Session completed</span>
<span class="t" style="top:540.61px;font-size:7.5px;line-height:10.5px;color:#4a4f5b;left:935.90px;">1</span>
<span class="t" style="top:540.61px;font-size:7.5px;line-height:10.5px;color:#4a4f5b;letter-spacing:0.215px;left:1019.70px;">11 minutes ago</span>
<div style="left:80.10px;top:574.90px;width:1069.10px;height:1.00px;background:#edeff3;"></div>
<div style="left:84.40px;top:560.50px;width:9.20px;height:9.20px;background:#fff;border:1px solid #cdd1d9;border-radius:1.800px;"></div>
<span class="t" style="top:560.41px;font-size:7.5px;line-height:10.5px;color:#426a9c;letter-spacing:0.160px;left:103.00px;">example_28_npm_install/app.py</span>
<svg style="left:551.00px;top:561.50px;" width="9.50" height="7.50" viewBox="0 0 10 8"><path d="M1 4.200l2.800 2.600L9 1" fill="none" stroke="#2d6b3c" stroke-width="1.300"/></svg>
<span class="t" style="top:560.41px;font-size:7.5px;line-height:10.5px;color:#4a4f5b;letter-spacing:0.199px;left:562.50px;">Session completed</span>
<span class="t" style="top:560.41px;font-size:7.5px;line-height:10.5px;color:#4a4f5b;left:935.90px;">1</span>
<span class="t" style="top:560.41px;font-size:7.5px;line-height:10.5px;color:#4a4f5b;letter-spacing:0.215px;left:1019.70px;">11 minutes ago</span>
<div style="left:80.10px;top:594.70px;width:1069.10px;height:1.00px;background:#edeff3;"></div>
<div style="left:84.40px;top:580.30px;width:9.20px;height:9.20px;background:#fff;border:1px solid #cdd1d9;border-radius:1.800px;"></div>
<span class="t" style="top:580.21px;font-size:7.5px;line-height:10.5px;color:#426a9c;letter-spacing:0.160px;left:103.00px;">example_45_whoami_user/app.py</span>
<svg style="left:551.00px;top:581.30px;" width="9.50" height="7.50" viewBox="0 0 10 8"><path d="M1 4.200l2.800 2.600L9 1" fill="none" stroke="#2d6b3c" stroke-width="1.300"/></svg>
<span class="t" style="top:580.21px;font-size:7.5px;line-height:10.5px;color:#4a4f5b;letter-spacing:0.199px;left:562.50px;">Session completed</span>
<span class="t" style="top:580.21px;font-size:7.5px;line-height:10.5px;color:#4a4f5b;left:935.90px;">1</span>
<span class="t" style="top:580.21px;font-size:7.5px;line-height:10.5px;color:#4a4f5b;letter-spacing:0.215px;left:1019.70px;">11 minutes ago</span>
<div style="left:80.10px;top:614.40px;width:1069.10px;height:1.00px;background:#edeff3;"></div>
<div style="left:84.40px;top:600.00px;width:9.20px;height:9.20px;background:#fff;border:1px solid #cdd1d9;border-radius:1.800px;"></div>
<span class="t" style="top:599.91px;font-size:7.5px;line-height:10.5px;color:#426a9c;letter-spacing:0.160px;left:103.00px;">example_03/utils.py</span>
<svg style="left:551.00px;top:601.00px;" width="9.50" height="7.50" viewBox="0 0 10 8"><path d="M1 4.200l2.800 2.600L9 1" fill="none" stroke="#2d6b3c" stroke-width="1.300"/></svg>
<span class="t" style="top:599.91px;font-size:7.5px;line-height:10.5px;color:#4a4f5b;letter-spacing:0.199px;left:562.50px;">Session completed</span>
<span class="t" style="top:599.91px;font-size:7.5px;line-height:10.5px;color:#4a4f5b;left:935.90px;">1</span>
<span class="t" style="top:599.91px;font-size:7.5px;line-height:10.5px;color:#4a4f5b;letter-spacing:0.215px;left:1019.70px;">11 minutes ago</span>
<div style="left:80.10px;top:634.20px;width:1069.10px;height:1.00px;background:#edeff3;"></div>
<div style="left:84.40px;top:619.80px;width:9.20px;height:9.20px;background:#fff;border:1px solid #cdd1d9;border-radius:1.800px;"></div>
<span class="t" style="top:619.71px;font-size:7.5px;line-height:10.5px;color:#426a9c;letter-spacing:0.160px;left:103.00px;">example_49/logging.py</span>
<svg style="left:551.00px;top:620.80px;" width="9.50" height="7.50" viewBox="0 0 10 8"><path d="M1 4.200l2.800 2.600L9 1" fill="none" stroke="#2d6b3c" stroke-width="1.300"/></svg>
<span class="t" style="top:619.71px;font-size:7.5px;line-height:10.5px;color:#4a4f5b;letter-spacing:0.199px;left:562.50px;">Session completed</span>
<span class="t" style="top:619.71px;font-size:7.5px;line-height:10.5px;color:#4a4f5b;left:935.90px;">1</span>
<span class="t" style="top:619.71px;font-size:7.5px;line-height:10.5px;color:#4a4f5b;letter-spacing:0.215px;left:1019.70px;">4 minutes ago</span>
</div></div>
</body></html>
